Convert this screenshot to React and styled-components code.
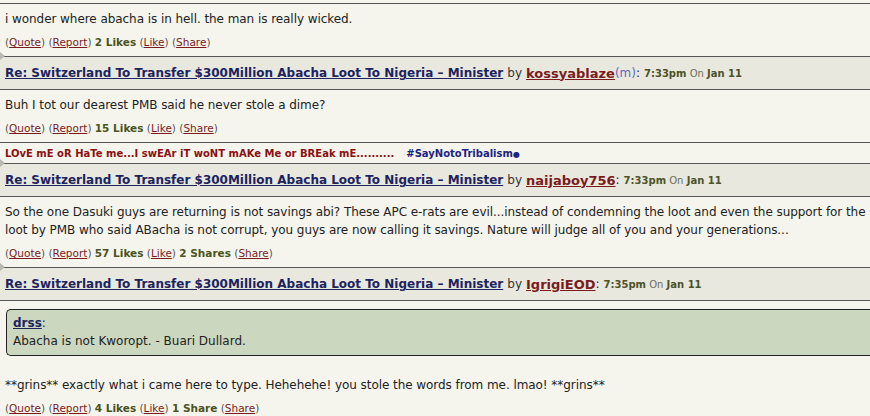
import { createGlobalStyle, styled } from "styled-components";

const Global = createGlobalStyle`
  html, body {
    margin: 0;
    padding: 0;
    background: #f5f5ee;
    overflow: hidden;
  }
  body {
    font-family: "DejaVu Sans", Verdana, sans-serif;
    color: #222;
  }
`;

const Thread = styled.div({
  width: "900px",
  marginTop: "3px",
  borderTop: "1px solid #555",
});

const Header = styled.div({
  position: "relative",
  background: "#e8e8df",
  borderBottom: "1px solid #555",
  height: "32px",
  display: "flex",
  alignItems: "center",
  paddingLeft: "5px",
  fontSize: "12px",
  whiteSpace: "nowrap",
  "&::before": {
    content: '""',
    position: "absolute",
    left: 0,
    top: "-5px",
    width: 0,
    height: 0,
    borderTop: "4px solid transparent",
    borderBottom: "4px solid transparent",
    borderLeft: "5px solid #b9b9b0",
  },
});

const Title = styled.a({
  color: "#1c2460",
  fontWeight: "bold",
  textDecoration: "underline",
  cursor: "pointer",
});

const By = styled.span({
  color: "#333",
  margin: "0 4px",
});

const User = styled.a({
  color: "#7a1c1c",
  fontWeight: "bold",
  textDecoration: "underline",
  fontSize: "13px",
});

const Gender = styled.span({
  color: "#6666bb",
});

const Time = styled.span({
  fontSize: "10px",
  color: "#4d5229",
  marginLeft: "4px",
  b: { fontWeight: "bold" },
  span: { color: "#6c6f5c" },
});

const Body = styled.div({
  borderBottom: "1px solid #555",
  padding: "6px 5px 6px",
  background: "#f5f5ee",
});

const Text = styled.div({
  fontSize: "12px",
  lineHeight: "18px",
  letterSpacing: "-0.06px",
  color: "#222",
  whiteSpace: "nowrap",
});

const Actions = styled.p({
  margin: "6px 0 0",
  fontSize: "10.5px",
  lineHeight: "16px",
  color: "#555",
  a: { color: "#7a1c1c", textDecoration: "underline" },
  b: { color: "#4b5320" },
});

const Signature = styled.div({
  borderBottom: "1px solid #555",
  height: "20px",
  display: "flex",
  alignItems: "center",
  paddingLeft: "5px",
  fontSize: "10px",
  fontWeight: "bold",
  color: "#8b1010",
  whiteSpace: "nowrap",
});

const Tag = styled.span({
  color: "#1c2480",
  marginLeft: "12px",
  small: { fontSize: "8px" },
});

const Quote = styled.blockquote({
  margin: "2px 0 20px 1px",
  background: "#cbd7bf",
  border: "1.5px solid #222",
  borderRight: "none",
  borderRadius: "5px 0 0 5px",
  padding: "4px 6px 5px",
  fontSize: "12px",
  lineHeight: "18px",
  a: { color: "#1c2460", fontWeight: "bold", textDecoration: "underline" },
});

function ActionLine({ likes, shares }) {
  return (
    <Actions>
      (<a>Quote</a>) (<a>Report</a>) <b>{likes} Likes</b> (<a>Like</a>)
      {shares ? <> <b>{shares}</b></> : null} (<a>Share</a>)
    </Actions>
  );
}

function PostHeader({ user, gender, time }) {
  return (
    <Header>
      <Title>Re: Switzerland To Transfer $300Million Abacha Loot To Nigeria – Minister</Title>
      <By>by</By>
      <User>{user}</User>
      {gender && <Gender>(m)</Gender>}:
      <Time>
        <b>{time}</b> <span>On</span> <b>Jan 11</b>
      </Time>
    </Header>
  );
}

export default function App() {
  return (
    <>
      <Global />
      <Thread>
        <Body>
          <Text>i wonder where abacha is in hell. the man is really wicked.</Text>
          <ActionLine likes="2" />
        </Body>

        <PostHeader user="kossyablaze" gender time="7:33pm" />
        <Body>
          <Text>Buh I tot our dearest PMB said he never stole a dime?</Text>
          <ActionLine likes="15" />
        </Body>
        <Signature>
          LOvE mE oR HaTe me...I swEAr iT woNT mAKe Me or BREak mE..........
          <Tag>
            #SayNotoTribalism<small>●</small>
          </Tag>
        </Signature>

        <PostHeader user="naijaboy756" time="7:33pm" />
        <Body>
          <Text>
            So the one Dasuki guys are returning is not savings abi? These APC e-rats are evil...instead of condemning the loot and even the support for the
            <br />
            loot by PMB who said ABacha is not corrupt, you guys are now calling it savings. Nature will judge all of you and your generations...
          </Text>
          <ActionLine likes="57" shares="2 Shares" />
        </Body>

        <PostHeader user="IgrigiEOD" time="7:35pm" />
        <Body>
          <Quote>
            <a>drss</a>:
            <br />
            Abacha is not Kworopt. - Buari Dullard.
          </Quote>
          <Text>**grins** exactly what i came here to type. Hehehehe! you stole the words from me. lmao! **grins**</Text>
          <ActionLine likes="4" shares="1 Share" />
        </Body>
      </Thread>
    </>
  );
}
